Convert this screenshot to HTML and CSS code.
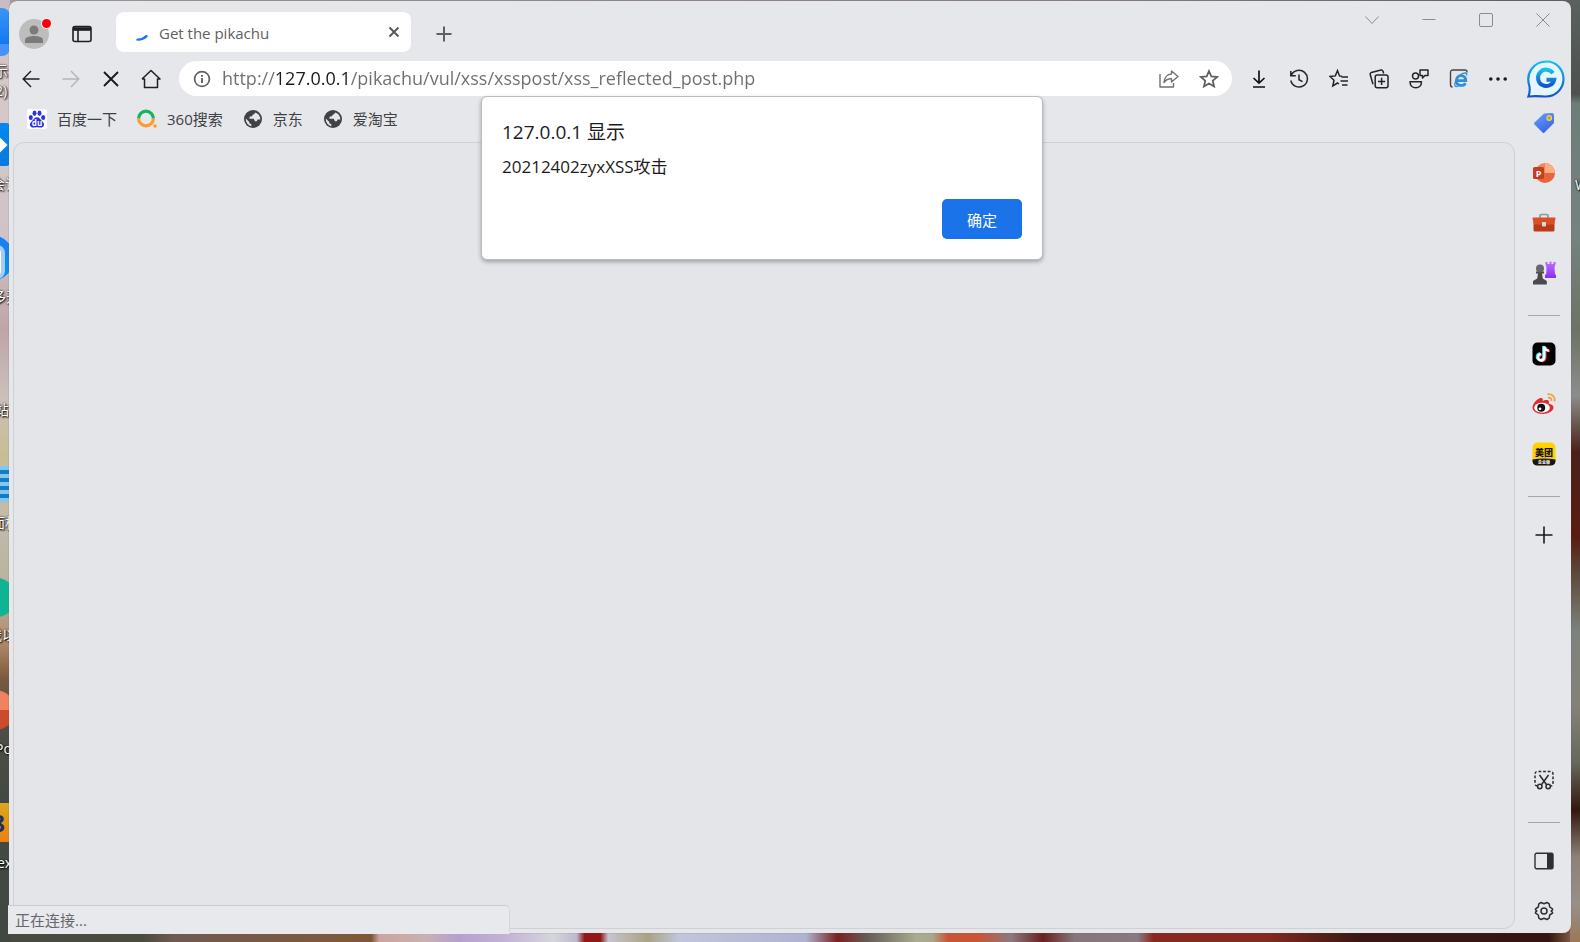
FILE: index.html
```html
<!DOCTYPE html>
<html lang="zh-CN">
<head>
<meta charset="utf-8">
<title>Get the pikachu</title>
<link rel="stylesheet" href="styles.css">
</head>
<body>
<div class="desktop">
  <div class="strip strip-left" aria-hidden="true">
    <span class="tile tile-blue"></span>
    <span class="cap cap-1">示</span>
    <span class="cap cap-2">2)</span>
    <span class="tile tile-arrow"></span>
    <span class="cap cap-3">会议</span>
    <span class="tile tile-ring"></span>
    <span class="cap cap-4">多开</span>
    <span class="cap cap-5">站</span>
    <span class="tile tile-list"></span>
    <span class="cap cap-6">面板</span>
    <span class="tile tile-green"></span>
    <span class="cap cap-7">我以</span>
    <span class="tile tile-ppt"></span>
    <span class="cap cap-8">Po</span>
    <span class="tile tile-box">8</span>
    <span class="cap cap-9">ex</span>
  </div>
  <div class="strip strip-right" aria-hidden="true"><span class="cap cap-10">W</span></div>

  <div class="window">
    <header class="titlebar">
      <button class="avatar" aria-label="个人资料">
        <svg width="30" height="30" viewBox="0 0 30 30"><circle cx="15" cy="15" r="15" fill="#bdbdbd"/><circle cx="15" cy="11" r="4.5" fill="#7b7b7b"/><path d="M6 24v-3c0-3 5-4 9-4s9 1 9 4v3z" fill="#7b7b7b"/></svg>
        <span class="dot"></span>
      </button>
      <button class="tab-actions" aria-label="标签操作菜单">
        <svg width="20" height="18" viewBox="0 0 20 18" fill="none" stroke="#1f1f1f" stroke-width="1.6"><rect x="1" y="1.5" width="18" height="15" rx="2"/><path d="M1 4h18" stroke-width="3.6"/><path d="M6 5v11"/></svg>
      </button>
      <div class="tab">
        <svg class="spinner" width="20" height="20" viewBox="0 0 20 20" fill="none" stroke="#1a73e8" stroke-width="2.4" stroke-linecap="round"><path d="M5.5 17.6c3.500.2 6.500-1 9-3.400"/></svg>
        <span class="tab-title">Get the pikachu</span>
        <button class="tab-close" aria-label="关闭标签页"><svg width="12" height="12" viewBox="0 0 12 12" stroke="#555" stroke-width="1.8"><path d="M1.500 1.500l9 9M10.500 1.500l-9 9"/></svg></button>
      </div>
      <button class="new-tab" aria-label="新建标签页"><svg width="16" height="16" viewBox="0 0 16 16" stroke="#5f5f62" stroke-width="2"><path d="M8 .5v15M.5 8h15"/></svg></button>
      <div class="captions">
        <button aria-label="搜索标签页"><svg width="14" height="14" viewBox="0 0 14 14" fill="none" stroke="#8c8c8e"><path d="M.5 3.500l6.500 7 6.500-7"/></svg></button>
        <button aria-label="最小化"><svg width="14" height="14" viewBox="0 0 14 14" stroke="#8c8c8e"><path d="M.5 6.500h13"/></svg></button>
        <button aria-label="最大化"><svg width="14" height="14" viewBox="0 0 14 14" fill="none" stroke="#8c8c8e"><rect x=".5" y=".5" width="13" height="13" rx="1.500"/></svg></button>
        <button aria-label="关闭"><svg width="14" height="14" viewBox="0 0 14 14" stroke="#8c8c8e"><path d="M.5.5l13 13M13.500.5l-13 13"/></svg></button>
      </div>
    </header>

    <nav class="toolbar">
      <button aria-label="后退"><svg width="18" height="18" viewBox="0 0 18 18" fill="none" stroke="#1f1f1f" stroke-width="1.400"><path d="M17.500 9H1.500M9 1L1.200 9 9 17"/></svg></button>
      <button aria-label="前进" disabled><svg width="18" height="18" viewBox="0 0 18 18" fill="none" stroke="#b4b5b8" stroke-width="1.400"><path d="M.5 9h16M9 1l7.800 8L9 17"/></svg></button>
      <button aria-label="停止"><svg width="18" height="18" viewBox="0 0 18 18" stroke="#1a1a1a" stroke-width="1.900"><path d="M2 2l14 14M16 2L2 16"/></svg></button>
      <button aria-label="主页"><svg width="20" height="20" viewBox="0 0 20 20" fill="none" stroke="#1f1f1f" stroke-width="1.500" stroke-linejoin="round"><path d="M3.500 9.500V18.500h13V9.500M1 10l9-8.500 9 8.500h-2.500M1 10h2.500"/></svg></button>
      <div class="address">
        <button class="info" aria-label="网站信息"><svg width="18" height="18" viewBox="0 0 18 18" fill="none" stroke="#606164" stroke-width="1.700"><circle cx="9" cy="9" r="7.400"/><path d="M9 8v5M9 5v1.800" stroke-width="1.900"/></svg></button>
        <input class="url" type="text" aria-label="地址栏" value="http://127.0.0.1/pikachu/vul/xss/xsspost/xss_reflected_post.php">
        <button aria-label="分享"><svg width="20" height="20" viewBox="0 0 20 20" fill="none" stroke="#707174" stroke-width="1.400" stroke-linejoin="round"><path d="M1 5v13h13.500v-4"/><path d="M12.500 2l6.500 5.500-6.500 5.500V9.800C9 9.500 7 10.800 5 13.500c.300-4.500 3-8.300 7.500-8.500z"/></svg></button>
        <button aria-label="收藏此页"><svg width="20" height="20" viewBox="0 0 20 20" fill="none" stroke="#5c5d60" stroke-width="1.700"><path d="M10 2l2.300 5.400 5.900.5-4.500 3.900 1.400 5.700-5.100-3.100-5.100 3.100 1.400-5.700L1.800 7.900l5.900-.5z"/></svg></button>
      </div>
      <button aria-label="下载"><svg width="18" height="18" viewBox="0 0 18 18" fill="none" stroke="#111" stroke-width="1.700"><path d="M9 .5v12.500M3.500 8L9 13.200 14.500 8M3 17h12"/></svg></button>
      <button aria-label="历史记录"><svg width="20" height="20" viewBox="0 0 20 20" fill="none" stroke="#242426" stroke-width="1.500"><path d="M2.300 6.300A8.400 8.400 0 1 1 1.800 11.500M1.800 2v4.800h5M10 5.500v5.200l3.500 2"/></svg></button>
      <button aria-label="收藏夹"><svg width="20" height="20" viewBox="0 0 20 20" fill="none" stroke="#242426" stroke-width="1.500"><path d="M13 7.200l-2.500-.3L8.500 1.600 6.300 6.900l-5.300.6 4 3.700-1.200 5.800L8.500 14l1.500 1M12.500 8H19M11.500 12H19M13 16h5.500"/></svg></button>
      <button aria-label="集锦"><svg width="20" height="20" viewBox="0 0 20 20" fill="none" stroke="#242426" stroke-width="1.500"><rect x="6.200" y="6" width="12.800" height="12.800" rx="2"/><path d="M12.600 8.800v7.200M9 12.400h7.200M4 15.200L1.200 5.500Q1 4 2.400 3.400L12 1Q13.500.8 14 2.300L14.700 4.500"/></svg></button>
      <button aria-label="反馈"><svg width="20" height="20" viewBox="0 0 20 20" fill="none" stroke="#242426" stroke-width="1.500" stroke-linejoin="round"><circle cx="6.500" cy="7" r="3"/><path d="M1 12.700h11.500c0 3.800-2.500 6-5.700 6S1 16.500 1 12.700zM11 1h8v5.500h-3L13.500 9V6.500H11z"/></svg></button>
      <button aria-label="Internet Explorer 模式"><svg width="20" height="20" viewBox="0 0 20 20" fill="none"><path d="M18 3.500V3q0-2-2-2H4Q1.500 1 1.500 3.500v12q0 2.500 2 2.500" stroke="#444" stroke-width="1.400"/><path d="M7.400 11.600h9.400c0-6.800-9.400-6.800-9.500.4 0 5.300 7.300 5.600 9.200 2.200" stroke="#2f8fdc" stroke-width="2.800"/><path d="M17.600 6.500c1.300-3.800-3.600-2.800-6.800-.2-4.200 3.700-5.800 9.200-4.800 10.700 1 1 2.500.5 4-.5" stroke="#2f8fdc" stroke-width="1.300"/></svg></button>
      <button aria-label="设置及其他"><svg width="20" height="20" viewBox="0 0 20 20" fill="#1a1a1a"><circle cx="1.800" cy="10" r="1.800"/><circle cx="9" cy="10" r="1.800"/><circle cx="16.200" cy="10" r="1.800"/></svg></button>
      <button class="chat" aria-label="聊天">
        <svg width="38" height="38" viewBox="0 0 38 38" fill="none"><defs><linearGradient id="ring" x1="0" y1="0" x2="0" y2="1"><stop stop-color="#16c0e8"/><stop offset="1" stop-color="#1552cf"/></linearGradient></defs><path d="M1.500 36.500c1.500-4 1.500-6 1-10C-2 13 7 1.500 19.500 1.500c10 0 17 8 17 17.500s-7.500 17.500-17.500 17.500c-4 0-10-1-17.500 0z" fill="#e6f6fd" stroke="url(#ring)" stroke-width="2.200"/><path d="M26 13.200a8.200 8.200 0 1 0 1.200 6.500H19.500" stroke="url(#ring)" stroke-width="4"/></svg>
      </button>
    </nav>

    <div class="body">
      <main class="main">
        <nav class="bookmarks">
          <a href="#baidu"><svg width="20" height="20" viewBox="0 0 20 20"><rect width="20" height="20" rx="2" fill="#fff"/><g fill="#2a32dd"><ellipse cx="3.800" cy="8.600" rx="2" ry="2.500"/><ellipse cx="7.500" cy="4.200" rx="2" ry="2.700"/><ellipse cx="12.500" cy="4.200" rx="2" ry="2.700"/><ellipse cx="16.200" cy="8.600" rx="2" ry="2.500"/><path d="M10 8.200c2.500 0 3.200 2.200 5 3.800 4 3.500 1.500 7-2 6.500q-3-.5-6 0c-3.500.5-6-3-2-6.500 1.800-1.600 2.500-3.800 5-3.800z"/></g><text x="10" y="16.500" text-anchor="middle" class="du">du</text></svg>百度一下</a>
          <a href="#so"><svg width="20" height="20" viewBox="0 0 20 20" fill="none" stroke-width="3.200"><path d="M1.600 9.500a7.400 7.400 0 0 1 14.800 0" stroke="#12b55b"/><path d="M16.400 9.500a7.400 7.400 0 0 1-14.800 0" stroke="#ff9a2e"/><circle cx="18" cy="17" r="1.800" fill="#ff9a2e"/></svg>360搜索</a>
          <a href="#jd"><svg width="20" height="20" viewBox="0 0 20 20"><circle cx="10" cy="10" r="9" fill="#414245"/><path d="M12 3.500c-.3 1.500-1 2-2.300 2.200L9 7.200 6.500 7.800v2h4.200l1.300 2.400h1.800l.8-1.700h2.700c.2-3-1.800-6-5.300-7zM2.800 9.500L6.300 13v1.200l2 1v2C4.500 16 2.800 13 2.800 9.500z" fill="#e6e7eb"/></svg>京东</a>
          <a href="#taobao"><svg width="20" height="20" viewBox="0 0 20 20"><circle cx="10" cy="10" r="9" fill="#414245"/><path d="M12 3.500c-.3 1.500-1 2-2.300 2.200L9 7.200 6.500 7.800v2h4.200l1.300 2.400h1.800l.8-1.700h2.700c.2-3-1.800-6-5.300-7zM2.800 9.500L6.300 13v1.200l2 1v2C4.500 16 2.800 13 2.800 9.500z" fill="#e6e7eb"/></svg>爱淘宝</a>
        </nav>
        <section class="page"></section>
        <dialog class="alert" open aria-labelledby="alert-title">
          <h1 id="alert-title">127.0.0.1 显示</h1>
          <p>20212402zyxXSS攻击</p>
          <button>确定</button>
        </dialog>
        <div class="status" role="status">正在连接...</div>
      </main>

      <aside class="sidebar">
        <button aria-label="购物"><svg width="24" height="24" viewBox="0 0 24 24"><defs><linearGradient id="tag" x1="0" y1="0" x2=".6" y2="1"><stop stop-color="#6aa3f8"/><stop offset="1" stop-color="#3b63e8"/></linearGradient></defs><path d="M12 2.500l8-.5q2 0 2 2v8L12.500 21.500q-1 1-2 0L2.500 13.500q-1-1 0-2z" fill="url(#tag)"/><circle cx="17.200" cy="7" r="2.300" fill="#b9a14b" stroke="#f2d84c" stroke-width="1.200"/></svg></button>
        <button aria-label="PowerPoint"><svg width="24" height="24" viewBox="0 0 24 24"><path d="M13 2a10 10 0 1 1-10 10h10z" fill="#e8643c"/><path d="M13 2A10 10 0 0 0 3 12h10z" fill="#f4845c"/><path d="M13 2a10 10 0 0 1 10 10H13z" fill="#ffae80"/><rect x="1" y="6" width="11" height="12" rx="1.500" fill="#c53e1f"/><text x="6.500" y="15.500" text-anchor="middle" class="p">P</text></svg></button>
        <button aria-label="工具"><svg width="24" height="24" viewBox="0 0 24 24"><path d="M8 7V4.500Q8 3.500 9 3.500h6q1 0 1 1V7" fill="none" stroke="#8d969c" stroke-width="1.600"/><rect x="1.500" y="7" width="21" height="13.500" rx="1.500" fill="#b83a18"/><path d="M.5 7.500q0-1 1-1h21q1 0 1 1l-1.500 6h-20z" fill="#d95027"/><rect x="10" y="11" width="4" height="4.500" rx="1" fill="#d5dade"/></svg></button>
        <button aria-label="游戏"><svg width="24" height="24" viewBox="0 0 24 24"><defs><linearGradient id="rook" x1="0" y1="0" x2="0" y2="1"><stop stop-color="#c070ff"/><stop offset="1" stop-color="#8c2cf5"/></linearGradient></defs><path d="M13 1h2.500v2h2V.5h2v2.500h2V1H24l-1.500 5.500.5 7H24V17H13v-3.500h1.200l.300-7z" fill="url(#rook)"/><path d="M4 10.500h8v2H10l.8 5 4 2.500v3.500H1V20l4.200-2.500.8-5H4z" fill="#4a4a4d"/><circle cx="8" cy="7.500" r="4" fill="#68686b"/></svg></button>
        <hr>
        <button aria-label="抖音"><svg width="24" height="24" viewBox="0 0 24 24" fill="none"><rect x=".5" y=".5" width="23" height="23" rx="5" fill="#000"/><g stroke-width="2.400"><path d="M12.300 4.500v10.800a3.200 3.200 0 1 1-3.200-3.200M12.300 4.500q.8 3.700 4.500 4.200" stroke="#25f4ee" transform="translate(-1 -.6)"/><path d="M12.300 4.500v10.800a3.200 3.200 0 1 1-3.200-3.200M12.300 4.500q.8 3.700 4.500 4.200" stroke="#fe2c55" transform="translate(1 .6)"/><path d="M12.300 4.500v10.800a3.200 3.200 0 1 1-3.200-3.200M12.300 4.500q.8 3.700 4.500 4.200" stroke="#fff"/></g></svg></button>
        <button aria-label="微博"><svg width="24" height="24" viewBox="0 0 24 24" fill="none"><path d="M.5 15.500c0-4 5.500-10 9-9.500 1.500.300 1.500 1.500 1 3 2-1 6.500-2 6.500.8 0 1-.5 1.700-.5 1.700 2.500.800 5 1.500 5 4 0 3.500-5 6.500-11 6.500S.5 19 .5 15.500z" fill="#e02c30"/><ellipse cx="10" cy="15.700" rx="7.800" ry="5" fill="#fff"/><circle cx="9.200" cy="15.800" r="4" fill="#111"/><circle cx="8" cy="16.800" r="1.400" fill="#fff"/><path d="M15.500 2.300c4.500-.8 8 2.700 7 7.200M16 5.800c2.500-.5 3.800 1.200 3.300 3.200" stroke="#f5a33c" stroke-width="1.900"/></svg></button>
        <button aria-label="美团"><svg width="24" height="24" viewBox="0 0 24 24"><rect x=".5" y=".5" width="23" height="23" rx="5" fill="#ffd100"/><path d="M.5 17.500q11.500-2 23 0v1q0 5-5 5h-13q-5 0-5-5z" fill="#15151a"/><text x="12" y="14" text-anchor="middle" class="mt">美团</text><text x="12" y="22" text-anchor="middle" class="mt-sub">企业版</text></svg></button>
        <hr>
        <button aria-label="添加"><svg width="18" height="18" viewBox="0 0 18 18" stroke="#1a1a1a" stroke-width="1.600"><path d="M9 .5v17M.5 9h17"/></svg></button>
        <span class="spacer"></span>
        <button aria-label="网页捕获"><svg width="20" height="20" viewBox="0 0 20 20" fill="none" stroke="#2a2a2c" stroke-width="1.500"><path d="M3.500 16Q1 16 1 13.500V4Q1 1.500 3.500 1.500h13Q19 1.500 19 4v9.500q0 2.500-2.500 2.500" stroke-dasharray="2.800 1.800"/><path d="M5.500 5l7.300 10M14.500 5L7.200 15"/><circle cx="5.800" cy="16.500" r="2.200"/><circle cx="14.200" cy="16.500" r="2.200"/></svg></button>
        <hr>
        <button aria-label="隐藏边栏"><svg width="20" height="18" viewBox="0 0 20 18"><path d="M13 1h4q2 0 2 2v12q0 2-2 2h-4z" fill="#2f2f31"/><rect x="1" y="1.200" width="18" height="15.600" rx="1.500" fill="none" stroke="#2f2f31" stroke-width="1.400"/></svg></button>
        <button aria-label="设置"><svg width="20" height="20" viewBox="0 0 20 20" fill="none" stroke="#2f2f31" stroke-width="1.500" stroke-linejoin="round"><path d="M7 1.500l3 1.200 3-1.200 2.200 1.300.5 3.200 2.800 1.900v1l-1.400 1.100 1.400 1.200v1l-2.800 1.800-.5 3.200L13 18.500l-3-1.200-3 1.200-2.200-1.300-.5-3.200-2.800-1.900v-1L2.900 10 1.500 8.800v-1L4.300 6l.5-3.200z"/><circle cx="10" cy="10" r="3"/></svg></button>
      </aside>
    </div>
  </div>
</div>
</body>
</html>
```
FILE: styles.css
```css
* { box-sizing: border-box; }

body {
  margin: 0;
  font-family: "Open Sans", "Noto Sans CJK SC", sans-serif;
  color: #1f1f1f;
}

button {
  display: flex;
  align-items: center;
  justify-content: center;
  padding: 0;
  border: 0;
  background: none;
  font: inherit;
}

svg { flex: none; }

/* desktop behind the window */
.desktop {
  position: relative;
  display: flex;
  min-height: 100vh;
  padding: 1px 9px 9px;
  overflow: hidden;
  background:
    linear-gradient(90deg, #a59a9c, #8d7f80 70%, #5c615e) top / 100% 12px no-repeat,
    linear-gradient(90deg, #454a42 0%, #4c4c3c 9%, #6f5a50 11%, #80593a 22%, #7f5737 23.500%, #cda49b 24%, #c9b0b4 27%, #b5a0cd 29%, #c3b2d6 32%, #d5d6dc 35%, #bdb9cc 36.500%, #901818 37%, #901818 38%, #c9c3d0 38.500%, #a8a384 41%, #c0c6dc 43%, #b0b3d0 51%, #7a2020 53%, #66605a 55%, #aaab91 58%, #a9a88a 59%, #c95539 60%, #c95539 62%, #8a7a80 64%, #6b2020 66%, #85767c 68%, #8a7a80 72%, #8a2820 73%, #852a20 80%, #3a1712 86%, #34150f 98%, #9c7758 100%);
}

.strip {
  position: absolute;
  top: 0;
  bottom: 0;
  width: 10px;
  overflow: hidden;
}

.strip-left {
  left: 0;
  background: linear-gradient(#c9bcc0 0%, #d6c9c9 10%, #cfc3c8 25%, #bfa5a8 35%, #cbbfba 42%, #c9bd98 48%, #c4bba9 55%, #b6b1a0 63%, #b58d6a 68%, #7a5a40 72%, #4d4e44 77%, #434a43 85%, #414741 100%);
}

.strip-right {
  right: 0;
  background: linear-gradient(#59625f 0%, #4d504f 10%, #6f7d79 11%, #75827f 25%, #6d7367 35%, #8b8d8c 42%, #4b2117 48%, #5b1c12 57%, #5d4a3a 61%, #7d827e 67%, #85817a 75%, #65685c 81%, #34170f 86%, #8b8378 91%, #969089 96%, #9c7758 100%);
}

.cap {
  position: absolute;
  font-size: 14px;
  line-height: 20px;
  color: #fff;
  white-space: nowrap;
  text-shadow: 0 0 2px #000, 1px 1px 2px #000;
}

.cap-1 { left: -6px; top: 61px; }
.cap-2 { left: -5px; top: 81px; }
.cap-3 { left: -9px; top: 174px; }
.cap-4 { left: -8px; top: 287px; }
.cap-5 { left: -5px; top: 400px; }
.cap-6 { left: -9px; top: 513px; }
.cap-7 { left: -12px; top: 625px; }
.cap-8 { left: -5px; top: 739px; }
.cap-9 { left: -3px; top: 853px; }
.cap-10 { left: 5px; top: 175px; }

.tile {
  position: absolute;
  right: 0;
  width: 46px;
  height: 46px;
  background: #1a7df2;
}

.tile-blue { top: 8px; height: 48px; border-radius: 8px; background: linear-gradient(#3a96f8, #1277f0 75%, #4692fb 76%); }
.tile-arrow { top: 123px; height: 43px; border-radius: 4px; background: linear-gradient(#0089f0, #0a79e0); }
.tile-arrow::after {
  content: "";
  position: absolute;
  right: 5px;
  top: 16px;
  width: 12px;
  height: 12px;
  background: #fff;
  transform: rotate(45deg);
}
.tile-ring { top: 235px; right: -4px; border-radius: 23px; background: linear-gradient(#1a7df2, #0a91e8); }
.tile-ring::after {
  content: "";
  position: absolute;
  right: 9px;
  top: 10px;
  width: 20px;
  height: 26px;
  border: 4px solid #a3cdf6;
  border-radius: 8px;
  background: #fff;
}
.tile-list { top: 466px; height: 36px; background: repeating-linear-gradient(#7fc8f2 0 4px, #1878c2 4px 8px); }
.tile-green { top: 578px; right: -6px; height: 39px; border-radius: 20px; background: #0fb592; }
.tile-ppt { top: 690px; right: -5px; height: 40px; border-radius: 20px; background: linear-gradient(#ef835f 50%, #cc4b2a 50%); }
.tile-box { top: 803px; height: 39px; background: linear-gradient(#dba81a, #ef7d16); font-size: 24px; font-weight: 700; line-height: 39px; text-align: right; padding-right: 5px; color: #1f2f5c; }

/* browser window */
.window {
  position: relative;
  flex: 1;
  display: flex;
  flex-direction: column;
  border-radius: 8px;
  background: #e6e7eb;
  box-shadow: 0 0 1px #555;
}

.titlebar {
  display: flex;
  align-items: flex-end;
  height: 51px;
  padding-left: 10px;
}

.avatar {
  position: relative;
  height: 36px;
  width: 30px;
}

.dot {
  position: absolute;
  right: -2px;
  top: 3px;
  width: 9px;
  height: 9px;
  border-radius: 5px;
  background: #fb0007;
  box-shadow: 0 0 0 1px #eceef2;
}

.tab-actions {
  width: 40px;
  height: 36px;
  margin: 0 14px 0 13px;
}

.tab {
  display: flex;
  align-items: center;
  width: 295px;
  height: 40px;
  padding: 0 9px 0 16px;
  border-radius: 8px;
  background: #fff;
}

.tab-title {
  flex: 1;
  margin-left: 7px;
  padding-top: 2px;
  font-size: 15px;
  line-height: 20px;
  color: #5f6064;
}

.tab-close { width: 16px; height: 24px; }

.new-tab {
  width: 40px;
  height: 36px;
  margin-left: 13px;
}

.captions {
  display: flex;
  align-self: flex-start;
  margin-left: auto;
}

.captions button { width: 57px; height: 38px; }

.toolbar {
  display: flex;
  align-items: center;
  height: 53px;
  padding-left: 2px;
}

.toolbar button { width: 40px; height: 36px; }
.toolbar .chat { width: 52px; padding-left: 2px; }

.address {
  flex: 1;
  display: flex;
  align-items: center;
  height: 35px;
  margin: 0 7px 0 8px;
  padding: 0 3px;
  border-radius: 18px;
  background: #fff;
}

.url {
  flex: 1;
  min-width: 0;
  height: 32px;
  padding: 0 0 2px;
  border: 0;
  outline: 0;
  font: 18px/30px "Open Sans", "Noto Sans CJK SC", sans-serif;
  color: transparent;
  /* host name is darker than the rest of the address */
  background: linear-gradient(90deg, #6d6e72 54px, #1a1a1a 54px 129px, #6d6e72 129px);
  -webkit-background-clip: text;
  background-clip: text;
}

.body {
  flex: 1;
  display: flex;
}

.main {
  position: relative;
  flex: 1;
  display: flex;
  flex-direction: column;
  padding: 0 0 4px 4px;
}

.bookmarks {
  display: flex;
  gap: 20px;
  height: 28px;
  margin-bottom: 9px;
  padding-left: 14px;
}

.bookmarks a {
  display: flex;
  align-items: center;
  gap: 10px;
  font-size: 15px;
  line-height: 20px;
  color: #3f4043;
  text-decoration: none;
}

.page {
  flex: 1;
  border: 1px solid #cfd0d3;
  border-radius: 11px;
  background: #e4e5e9;
}

.alert {
  position: absolute;
  top: -9px;
  left: 0;
  right: 0;
  display: flex;
  flex-direction: column;
  width: 562px;
  margin: 0 auto;
  padding: 20px;
  border: 1px solid #b9bbbe;
  border-radius: 6px;
  background: #fff;
  box-shadow: 0 2px 4px rgb(0 0 0 / 30%);
  color: #1c1c1e;
}

.alert h1 {
  margin: 0;
  font-size: 19px;
  font-weight: 400;
  line-height: 30px;
}

.alert p {
  margin: 8px 0 20px;
  font-size: 17px;
  line-height: 24px;
}

.alert button {
  align-self: flex-end;
  width: 80px;
  height: 40px;
  border-radius: 5px;
  background: #1a73e8;
  color: #fff;
  font-size: 15px;
}

.status {
  position: absolute;
  left: -1px;
  bottom: -1px;
  width: 502px;
  height: 29px;
  padding-left: 7px;
  border-top: 1px solid #cbccce;
  border-right: 1px solid #d6d7da;
  border-radius: 0 5px 0 0;
  background: #e8e9ed;
  font-size: 15px;
  line-height: 29px;
  color: #66676a;
}

.sidebar {
  display: flex;
  flex-direction: column;
  align-items: center;
  gap: 14px;
  width: 56px;
  padding: 0 0 4px 2px;
}

.sidebar button { width: 40px; height: 36px; }

.sidebar hr {
  width: 32px;
  height: 1px;
  margin: 10px 0 6px;
  border: 0;
  background: #a5a6a9;
}

.spacer { flex: 1; }

.du { font: 700 8px "Open Sans", sans-serif; fill: #fff; }
.p { font: 700 9px "Open Sans", sans-serif; fill: #fff; }
.mt { font: 900 9px "Noto Sans CJK SC", sans-serif; fill: #15151a; }
.mt-sub { font: 700 4px "Noto Sans CJK SC", sans-serif; fill: #fff; }
```
